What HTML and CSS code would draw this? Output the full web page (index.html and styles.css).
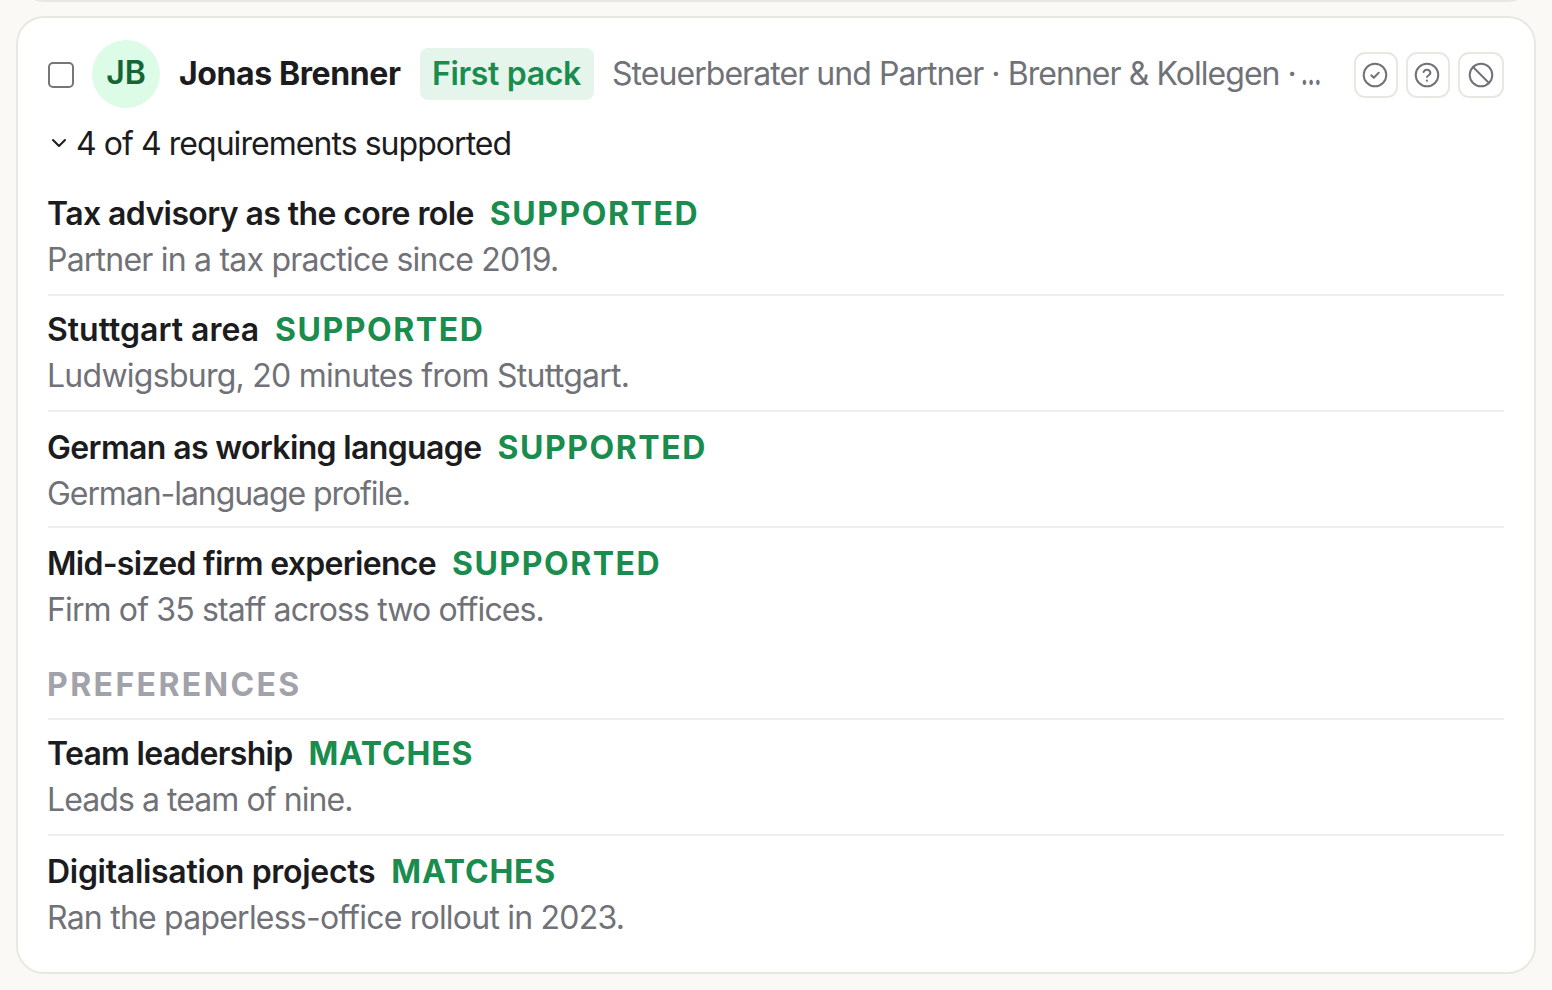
FILE: index.html
```html
<!DOCTYPE html>
<html lang="en">
<head>
  <meta charset="utf-8">
  <title>Candidates</title>
  <link rel="stylesheet" href="styles.css">
</head>
<body>
  <div class="card previous"></div>

  <article class="card">
    <header class="card-header">
      <input type="checkbox" class="select" aria-label="Select Jonas Brenner">
      <span class="avatar">JB</span>
      <span class="name">Jonas Brenner</span>
      <span class="pack">First pack</span>
      <span class="headline">Steuerberater und Partner · Brenner &amp; Kollegen · <span class="dots">…</span></span>
      <div class="actions">
        <button aria-label="Accept">
          <svg viewBox="0 0 26 26"><circle cx="13" cy="13" r="11.3"/><path d="M9.3 13.2l2.5 2.5 4.9-4.9"/></svg>
        </button>
        <button aria-label="Unsure">
          <svg viewBox="0 0 26 26"><circle cx="13" cy="13" r="11.3"/><path d="M9.6 10a3.5 3.5 0 0 1 6.8 1.1c0 2.3-3.4 2.4-3.4 4M13 18.6v.2"/></svg>
        </button>
        <button class="wide" aria-label="Reject">
          <svg viewBox="0 0 26 26"><circle cx="13" cy="13" r="11.3"/><path d="M5 5l16 16"/></svg>
        </button>
      </div>
    </header>

    <div class="summary">
      <svg class="chevron" viewBox="0 0 16 10"><path d="M2 2l6 6 6-6"/></svg>
      <span class="summary-text">4 of 4 requirements supported</span>
    </div>

    <ul class="checks">
      <li class="tax">
        <div class="line"><span class="title">Tax advisory as the core role</span><span class="status">SUPPORTED</span></div>
        <p>Partner in a tax practice since 2019.</p>
      </li>
      <li class="area">
        <div class="line"><span class="title">Stuttgart area</span><span class="status">SUPPORTED</span></div>
        <p>Ludwigsburg, 20 minutes from Stuttgart.</p>
      </li>
      <li class="language low">
        <div class="line"><span class="title">German as working language</span><span class="status">SUPPORTED</span></div>
        <p>German-language profile.</p>
      </li>
      <li class="firm low">
        <div class="line"><span class="title">Mid-sized firm experience</span><span class="status">SUPPORTED</span></div>
        <p>Firm of 35 staff across two offices.</p>
      </li>
    </ul>

    <h3 class="group">PREFERENCES</h3>
    <ul class="checks preferences">
      <li class="team">
        <div class="line"><span class="title">Team leadership</span><span class="status">MATCHES</span></div>
        <p>Leads a team of nine.</p>
      </li>
      <li class="projects low">
        <div class="line"><span class="title">Digitalisation projects</span><span class="status">MATCHES</span></div>
        <p>Ran the paperless-office rollout in 2023.</p>
      </li>
    </ul>
  </article>
</body>
</html>
```
FILE: styles.css
```css
:root {
  --bg: #faf9f5;
  --border: #e8e8e3;
  --rule: #efefef;
  --text: #1c1c1e;
  --muted: #717178;
  --green: #1a8d4e;
}

* {
  box-sizing: border-box;
}

body {
  margin: 0;
  height: 990px;
  overflow: hidden;
  padding: 0 16px;
  background: var(--bg);
  color: var(--text);
  font: 32px/46px Inter, "Liberation Sans", sans-serif;
}

.card {
  height: 958px;
  padding: 22px 30px 0;
  border: 2px solid var(--border);
  border-radius: 28px;
  background: #fff;
}

.previous {
  height: 60px;
  margin: -58px 0 14px;
}

.card-header {
  display: flex;
  align-items: center;
  height: 68px;
  white-space: nowrap;
}

.card-header > * {
  flex-shrink: 0;
}

.select {
  appearance: none;
  width: 26px;
  height: 26px;
  margin: 2px 18px 0 0;
  border: 2px solid #767676;
  border-radius: 5px;
  background: #fff;
}

.avatar {
  width: 68px;
  height: 68px;
  margin-right: 19px;
  border-radius: 50%;
  background: #dcfce7;
  color: #166534;
  font-weight: 600;
  line-height: 66px;
  letter-spacing: 0;
  text-align: center;
}

.name {
  width: 221px;
  margin-right: 20px;
  font-weight: 700;
  line-height: 44px;
  letter-spacing: -0.4px;
}

.pack {
  width: 174px;
  height: 52px;
  padding-left: 12px;
  margin-right: 18px;
  border-radius: 8px;
  background: #e6f5ec;
  color: var(--green);
  font-weight: 600;
  line-height: 51px;
  letter-spacing: -0.35px;
}

.headline {
  flex: 1;
  min-width: 0;
  color: var(--muted);
  letter-spacing: -0.95px;
}

.dots {
  display: inline-block;
  margin-left: -3px;
  font-weight: 700;
  transform: scaleX(0.63);
  transform-origin: left;
}

.actions {
  display: flex;
  gap: 8px;
  margin-top: 2px;
}

.actions button {
  display: flex;
  align-items: center;
  justify-content: center;
  width: 44px;
  height: 46px;
  padding: 0 2px 0 0;
  border: 2px solid var(--border);
  border-radius: 11px;
  background: #fff;
}

.actions .wide {
  width: 46px;
  padding: 0;
}

svg {
  fill: none;
  stroke: currentColor;
  stroke-width: 2;
  stroke-linecap: round;
  stroke-linejoin: round;
}

.actions svg {
  flex-shrink: 0;
  width: 26px;
  height: 26px;
  color: var(--muted);
}

.summary {
  display: flex;
  align-items: center;
  height: 46px;
  margin-top: 13px;
}

.chevron {
  width: 16px;
  height: 10px;
  margin: 0 9px 2px 3px;
}

.summary-text {
  letter-spacing: -0.95px;
}

.checks {
  margin: 12px 0 0;
  padding: 0;
  list-style: none;
}

.checks li {
  padding: 11px 0;
}

.checks .low {
  padding: 13px 0 9px;
}

.checks li + li,
.preferences {
  border-top: 2px solid var(--rule);
}

/* the first row has no rule above it */
.checks .tax {
  padding-top: 12px;
}

.line {
  display: flex;
  gap: 16px;
  margin-left: -1px;
}

.title {
  font-weight: 600;
  letter-spacing: -0.6px;
}

.status {
  color: var(--green);
  font-weight: 700;
  letter-spacing: 1.55px;
}

p {
  margin: 0 0 0 -1px;
  color: var(--muted);
  letter-spacing: -0.78px;
}

.area .title {
  letter-spacing: 0;
}

.area p {
  letter-spacing: -0.74px;
}

.language .title {
  letter-spacing: -0.65px;
}

.language p {
  letter-spacing: -1.07px;
}

.firm .title {
  letter-spacing: -0.72px;
}

.firm p {
  letter-spacing: -0.87px;
}

.team .title {
  letter-spacing: -0.72px;
}

.team p {
  letter-spacing: -0.93px;
}

.projects .title {
  letter-spacing: -0.3px;
}

.preferences .status {
  letter-spacing: 0.8px;
}

.group {
  margin: 20px 0 0 -1px;
  color: #a2a2aa;
  font-size: 32px;
  font-weight: 700;
  letter-spacing: 2.4px;
}

.preferences {
  margin-top: 10px;
}
```
